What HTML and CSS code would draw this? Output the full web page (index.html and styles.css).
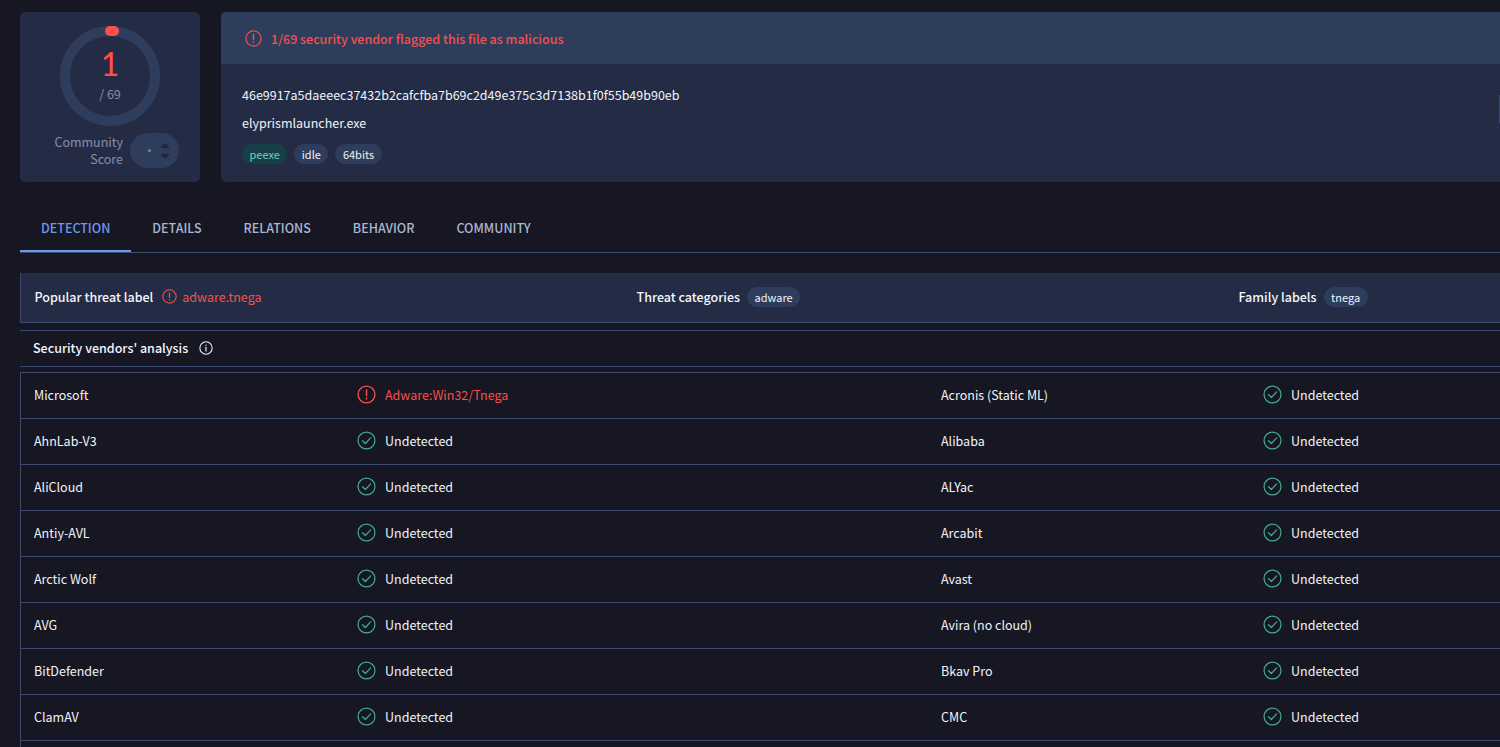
FILE: index.html
```html
<!DOCTYPE html>
<html lang="en">
<head>
    <meta charset="UTF-8">
    <meta name="viewport" content="width=device-width, initial-scale=1.0">
    <title>File report</title>
    <link rel="stylesheet" href="styles.css">
</head>
<body>

<svg class="icon-defs" width="0" height="0">
    <symbol id="icon-alert" viewBox="0 0 20 20">
        <circle cx="10" cy="10" r="8.9" fill="none" stroke="currentColor" stroke-width="1.4"/>
        <path d="M10 5.2v6" fill="none" stroke="currentColor" stroke-width="1.6" stroke-linecap="round"/>
        <circle cx="10" cy="14.2" r="1" fill="currentColor"/>
    </symbol>
    <symbol id="icon-check" viewBox="0 0 20 20">
        <circle cx="10" cy="10" r="8.9" fill="none" stroke="currentColor" stroke-width="1.3"/>
        <path d="M5.8 10.2l3 3 5.6-6" fill="none" stroke="currentColor" stroke-width="1.3" stroke-linecap="round" stroke-linejoin="round"/>
    </symbol>
    <symbol id="icon-info" viewBox="0 0 20 20">
        <circle cx="10" cy="10" r="8.8" fill="none" stroke="currentColor" stroke-width="1.5"/>
        <path d="M10 9v5.4" fill="none" stroke="currentColor" stroke-width="1.6" stroke-linecap="round"/>
        <circle cx="10" cy="5.9" r="1" fill="currentColor"/>
    </symbol>
</svg>

<div class="page">
    <div class="summary">
        <div class="score-card">
            <div class="gauge">
                <svg class="gauge-ring" width="100" height="100" viewBox="0 0 100 100">
                    <circle cx="50" cy="50" r="45" fill="none" stroke="#2e3d5c" stroke-width="10"/>
                    <rect x="45" y="0" width="14" height="10" rx="5" fill="#ff4f4a"/>
                </svg>
                <div class="gauge-num">1</div>
                <div class="gauge-total">/ 69</div>
            </div>
            <div class="community">
                <div class="community-label">Community<br>Score</div>
                <div class="community-pill">
                    <span class="community-dot"></span>
                    <span class="community-arrows">
                        <span class="arrow-up"></span>
                        <span class="arrow-down"></span>
                    </span>
                </div>
            </div>
        </div>

        <div class="file-card">
            <div class="file-banner">
                <svg class="icon-banner"><use href="#icon-alert"/></svg>
                <span>1/69 security vendor flagged this file as malicious</span>
            </div>
            <div class="file-body">
                <div class="file-hash">46e9917a5daeeec37432b2cafcfba7b69c2d49e375c3d7138b1f0f55b49b90eb</div>
                <div class="file-name">elyprismlauncher.exe</div>
                <div class="tags">
                    <span class="tag tag-green">peexe</span>
                    <span class="tag">idle</span>
                    <span class="tag">64bits</span>
                </div>
            </div>
            <div class="card-handle"></div>
        </div>
    </div>

    <div class="tabs">
        <div class="tab tab-active">DETECTION</div>
        <div class="tab">DETAILS</div>
        <div class="tab">RELATIONS</div>
        <div class="tab">BEHAVIOR</div>
        <div class="tab">COMMUNITY</div>
    </div>

    <div class="threat-bar">
        <div class="threat-item">
            <b>Popular threat label</b>
            <svg class="icon-small"><use href="#icon-alert"/></svg>
            <span class="red">adware.tnega</span>
        </div>
        <div class="threat-item">
            <b>Threat categories</b>
            <span class="tag">adware</span>
        </div>
        <div class="threat-item">
            <b>Family labels</b>
            <span class="tag">tnega</span>
        </div>
    </div>

    <div class="vendors-head">
        <b>Security vendors' analysis</b>
        <svg class="icon-info"><use href="#icon-info"/></svg>
    </div>

    <div class="vendors" id="vendors"></div>
</div>

<script>
    const rows = [
        ['Microsoft', 'Acronis (Static ML)'],
        ['AhnLab-V3', 'Alibaba'],
        ['AliCloud', 'ALYac'],
        ['Antiy-AVL', 'Arcabit'],
        ['Arctic Wolf', 'Avast'],
        ['AVG', 'Avira (no cloud)'],
        ['BitDefender', 'Bkav Pro'],
        ['ClamAV', 'CMC']
    ];

    function resultCell(vendor) {
        if (vendor === 'Microsoft') {
            return `<div class="result red"><svg class="icon-result"><use href="#icon-alert"/></svg>Adware:Win32/Tnega</div>`;
        }
        return `<div class="result"><svg class="icon-result green"><use href="#icon-check"/></svg>Undetected</div>`;
    }

    const vendors = document.getElementById('vendors');
    rows.forEach(row => {
        const div = document.createElement('div');
        div.className = 'vendor-row';
        div.innerHTML = `
            <div>${row[0]}</div>${resultCell(row[0])}
            <div>${row[1]}</div>${resultCell(row[1])}
        `;
        vendors.appendChild(div);
    });
</script>

</body>
</html>
```
FILE: styles.css
```css
html, body {
    height: 100%;
    overflow: hidden;
}

body {
    margin: 0;
    background: #161723;
    color: #f1f3f8;
    font-family: "Noto Sans CJK SC", "Noto Sans", sans-serif;
    font-size: 12.5px;
}

b {
    font-weight: 500;
    color: #f4f6fa;
}

.icon-defs {
    position: absolute;
}

.page {
    display: flex;
    flex-direction: column;
    height: 747px;
    box-sizing: border-box;
    padding: 12px 0 0 20px;
}

.red {
    color: #f4504a;
}

.green {
    color: #45a894;
}

.summary {
    display: flex;
    gap: 21px;
    height: 170px;
    flex: none;
}

.score-card {
    width: 180px;
    flex: none;
    box-sizing: border-box;
    padding-top: 14px;
    background: #242c45;
    border-radius: 5px;
}

.gauge {
    position: relative;
    width: 100px;
    height: 100px;
    margin-left: 40px;
}

.gauge-ring {
    display: block;
}

.gauge-num {
    position: absolute;
    top: 21px;
    left: 0;
    width: 100px;
    text-align: center;
    font-family: Lato, sans-serif;
    font-size: 32px;
    line-height: 34px;
    color: #ff4f4a;
}

.gauge-total {
    position: absolute;
    top: 59px;
    left: 0;
    width: 100px;
    text-align: center;
    font-size: 12.5px;
    line-height: 18px;
    color: #8590a8;
}

.community {
    display: flex;
    margin-top: 6px;
    padding-left: 20px;
}

.community-label {
    width: 83px;
    margin-top: 1px;
    text-align: right;
    line-height: 17px;
    color: #8590a8;
}

.community-pill {
    display: flex;
    align-items: center;
    justify-content: flex-end;
    width: 49px;
    height: 35px;
    box-sizing: border-box;
    margin: 1px 0 0 7px;
    padding-right: 9px;
    gap: 9px;
    background: #2e3d5c;
    border-radius: 18px;
}

.community-dot {
    width: 3px;
    height: 3px;
    background: #7c88a2;
    border-radius: 50%;
}

.community-arrows {
    display: flex;
    flex-direction: column;
    gap: 6px;
}

.arrow-up, .arrow-down {
    width: 0;
    height: 0;
    border-left: 5px solid transparent;
    border-right: 5px solid transparent;
}

.arrow-up {
    border-bottom: 5px solid #1e2740;
}

.arrow-down {
    border-top: 5px solid #1e2740;
}

.file-card {
    position: relative;
    flex: 1;
    background: #242c45;
    border-radius: 5px 0 0 5px;
    overflow: hidden;
}

.card-handle {
    position: absolute;
    top: 83px;
    right: 0;
    width: 1px;
    height: 28px;
    background: #3c4a70;
}

.file-banner {
    display: flex;
    align-items: center;
    height: 52px;
    padding-left: 24px;
    background: #2e3d5c;
    color: #f4504a;
    font-weight: 500;
}

.icon-banner {
    width: 17px;
    height: 17px;
    margin-right: 9px;
}

.file-body {
    padding: 21px 0 0 21px;
}

.file-hash {
    line-height: 20px;
}

.file-name {
    margin-top: 8px;
    line-height: 20px;
}

.tags {
    display: flex;
    gap: 7px;
    margin-top: 11px;
}

.tag {
    display: inline-block;
    padding: 0 7.5px;
    height: 20px;
    line-height: 20px;
    font-size: 11px;
    border-radius: 10px;
    background: #2e3d5c;
    color: #f1f3f8;
}

.tag-green {
    background: #173f46;
    color: #72d0bd;
}

.tabs {
    display: flex;
    flex: none;
    height: 71px;
    box-sizing: border-box;
    margin-bottom: 20px;
    border-bottom: 1px solid #3c4a70;
}

.tab {
    display: flex;
    align-items: center;
    height: 70px;
    padding: 21px 21px 0;
    box-sizing: border-box;
    font-weight: 500;
    color: #aab6cf;
}

.tab-active {
    padding-top: 23px;
    color: #6f97ea;
    border-bottom: 2px solid #6f97ea;
}

.threat-bar {
    display: grid;
    flex: none;
    grid-template-columns: 602px 602px 1fr;
    align-items: center;
    height: 50px;
    box-sizing: border-box;
    padding: 0 0 2px 13.5px;
    background: #242c45;
    border-left: 1px solid #3c4a70;
    border-bottom: 1px solid #3c4a70;
}

.threat-item {
    display: flex;
    align-items: center;
}

.threat-item .tag {
    margin-left: 7px;
}

.icon-small {
    width: 15px;
    height: 15px;
    margin: 0 5px 0 9px;
    color: #f4504a;
}

.vendors-head {
    display: flex;
    flex: none;
    align-items: center;
    height: 37px;
    box-sizing: border-box;
    margin-top: 7px;
    padding: 0 0 2px 13px;
    border-top: 1px solid #3c4a70;
    border-bottom: 1px solid #3c4a70;
}

.icon-info {
    width: 14px;
    height: 14px;
    margin-left: 11px;
    color: #f1f3f8;
}

.vendors {
    flex: 1;
    margin-top: 5px;
    border-left: 1px solid #3c4a70;
    border-top: 1px solid #3c4a70;
}

.vendor-row {
    display: grid;
    grid-template-columns: 322.5px 584.5px 321.5px 1fr;
    align-items: center;
    height: 46px;
    box-sizing: border-box;
    padding: 0 0 2px 13px;
    border-bottom: 1px solid #3c4a70;
}

.result {
    display: flex;
    align-items: center;
}

.icon-result {
    width: 19px;
    height: 19px;
    margin-right: 9.5px;
}
```
